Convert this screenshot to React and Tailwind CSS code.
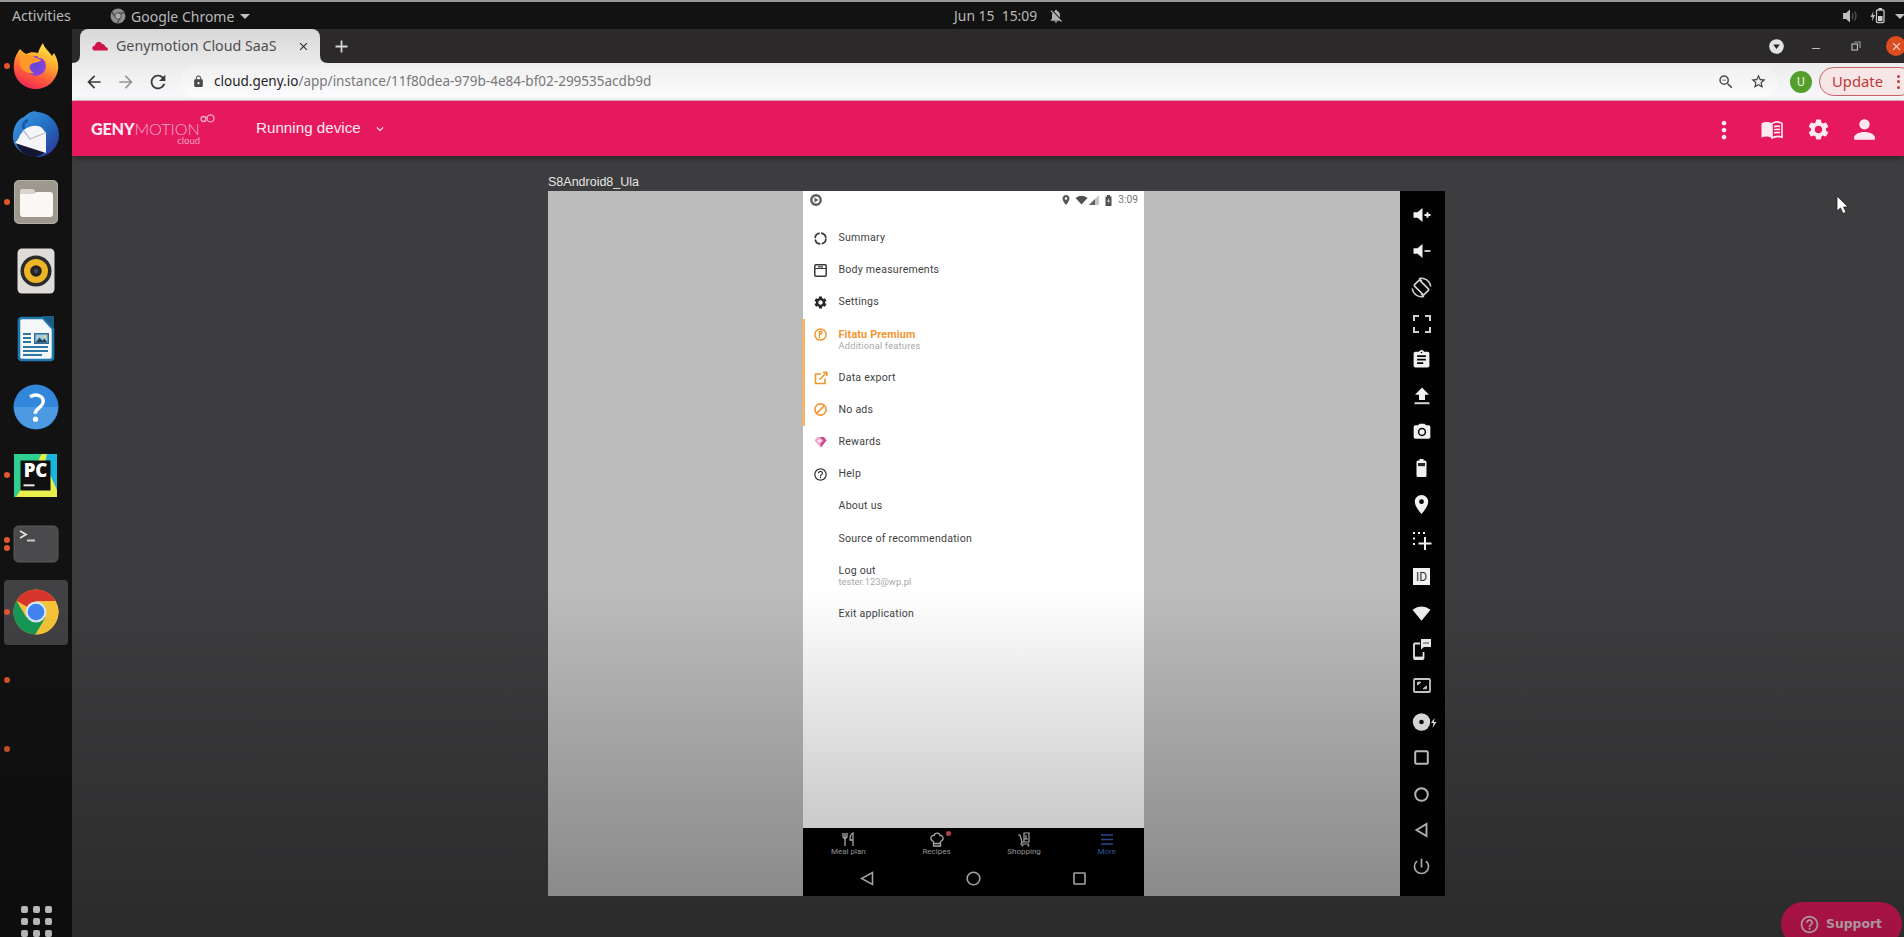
import React from "react";
import {
  MdMoreVert, MdSettings, MdPerson, MdAssignment,
  MdPhotoCamera, MdLocationOn, MdPowerSettingsNew, MdArrowBack,
  MdArrowForward, MdRefresh, MdLock, MdStarBorder, MdExpandMore, MdHelpOutline, MdDoNotDisturbAlt,
  MdNotificationsOff, MdZoomOut, MdClose,
} from "react-icons/md";

function Svg({ w = 24, h = 24, vb = "0 0 24 24", children, className = "" }) {
  return (
    <svg width={w} height={h} viewBox={vb} fill="none" className={"shrink-0 " + className}>
      {children}
    </svg>
  );
}

/* ---------- Dock ---------- */

const Firefox = () => (
  <Svg w={46} h={48} vb="0 0 46 48">
    <defs>
      <linearGradient id="ff1" x1="0.75" y1="0" x2="0.3" y2="1">
        <stop offset="0" stopColor="#fff04a" />
        <stop offset="0.4" stopColor="#ffa52c" />
        <stop offset="0.7" stopColor="#ff5a3c" />
        <stop offset="1" stopColor="#ee2457" />
      </linearGradient>
      <radialGradient id="ff2">
        <stop offset="0" stopColor="#5b4bd8" />
        <stop offset="1" stopColor="#9340d8" />
      </radialGradient>
    </defs>
    <path d="M7 7c2 2 4 4 6 5 4-2 8-2 12-1C26 7 28 4 30 1c1 5 6 8 9 13l2-3c3 5 5 11 4 17-2 11-11 19-22 19S2 39 1 28C0 19 3 12 7 7z" fill="url(#ff1)" />
    <circle cx="23" cy="24" r="10" fill="url(#ff2)" />
    <path d="M7 15c5-2 9-3 14 0l7 3c-2 3-7 2-10 4-3 3-1 7 3 9-5 1-11-1-13-6-2-3-1-7-1-10z" fill="#ff9a2a" />
    <path d="M25 12c5 0 9 4 10 9-3-4-6-5-10-5z" fill="#ffb52e" />
  </Svg>
);

const Thunderbird = () => (
  <Svg w={48} h={48} vb="0 0 48 48">
    <defs>
      <linearGradient id="tb" x1="0" y1="0" x2="1" y2="1">
        <stop offset="0" stopColor="#3f9be6" />
        <stop offset="0.5" stopColor="#2470c4" />
        <stop offset="1" stopColor="#2a2f92" />
      </linearGradient>
    </defs>
    <path d="M19 2c2-1 5-1 6 0 13 1 22 11 22 23S37 47 25 47 0 38 1 26C1 18 5 9 12 7c2-2 4-4 7-5z" fill="url(#tb)" />
    <path d="M4 33l30 8c-4 4-9 6-13 6-7-1-14-6-17-14z" fill="#151433" />
    <path d="M12 20c4-4 14-6 18-2l4 5 0 20L3 33c2-2 4-5 5-8z" fill="#f5f5f8" />
    <path d="M11 20l7 9 15-6" stroke="#b9bcc6" strokeWidth="1.3" />
    <path d="M12 19c-2-4 0-7 4-9" stroke="#1b58a8" strokeWidth="3" />
  </Svg>
);

const Files = () => (
  <Svg w={46} h={46} vb="0 0 46 46">
    <rect x="1" y="1" width="44" height="44" rx="5" fill="#9d998e" />
    <rect x="1.5" y="1.5" width="43" height="43" rx="5" stroke="#b3afa5" />
    <path d="M7 12q0-2 2-2h10q2 0 3 2l0 4H7z" fill="#dad5cc" />
    <path d="M7 15h14l2-2h14q3 0 3 3v19q0 3-3 3H10q-3 0-3-3z" fill="#faf7f5" />
  </Svg>
);

const Rhythmbox = () => (
  <Svg w={38} h={46} vb="0 0 38 46">
    <rect x="0.5" y="0.5" width="37" height="45" rx="4.5" fill="#dedbd8" />
    <circle cx="19" cy="23" r="15.5" fill="#2b2b2b" />
    <circle cx="19" cy="23" r="12" fill="#edb526" />
    <circle cx="19" cy="23" r="5.8" fill="#232326" />
    <circle cx="19" cy="23" r="2.2" fill="#42485a" />
  </Svg>
);

const Writer = () => (
  <Svg w={38} h={46} vb="0 0 38 46">
    <path d="M5 2h21l10 11v28q0 3-3 3H5q-3 0-3-3V5q0-3 3-3z" fill="#f5f8fa" stroke="#1e78ad" strokeWidth="2.6" />
    <path d="M25 0h12v12z" fill="#1a5d86" />
    <path d="M6 18h8M6 22h8M6 26h8M6 31h25M6 35h25M6 39h19" stroke="#2f76a3" strokeWidth="1.8" />
    <rect x="17" y="17" width="15" height="11" fill="#2e6d96" />
    <rect x="18.5" y="18.5" width="12" height="8" fill="#a5cde2" />
    <path d="M18.5 26.5l4-5 3 3 2-2 3 4z" fill="#26475c" />
    <circle cx="28" cy="20.5" r="1.3" fill="#f2d65c" />
  </Svg>
);

const Help = () => (
  <Svg w={46} h={46} vb="0 0 46 46">
    <circle cx="23" cy="23" r="22.5" fill="#3287da" />
    <path d="M1 23a22 22 0 0 0 44 0z" fill="#4d9ae2" />
    <path d="M17 12.8c6-3.6 13.2-1.2 13.2 4.4 0 6-8 6.8-8 12.6" stroke="#fff" strokeWidth="3.4" />
    <circle cx="22.5" cy="35.2" r="2.6" fill="#fff" />
  </Svg>
);

const PyCharm = () => (
  <div className="relative flex h-[43px] w-[43px] items-center justify-center">
    <Svg w={43} h={43} vb="0 0 43 43" className="absolute inset-0">
      <rect width="43" height="43" fill="#2fd58b" />
      <path d="M0 36L28 0h6l9 15v28H0z" fill="#e9ee4c" />
      <path d="M0 0h27L22 14 7 35 2 43H0z" fill="#2fcf8f" />
      <path d="M33 0h10v36L31 9z" fill="#18b5dc" />
      <rect x="6.5" y="6.5" width="30" height="30" fill="#101010" />
      <rect x="9.5" y="30.3" width="11" height="2" fill="#e6e6e6" />
    </Svg>
    <span className="relative -mt-[11px] font-['Open_Sans',sans-serif] text-[18.5px] font-extrabold leading-none text-white">PC</span>
  </div>
);

const Terminal = () => (
  <Svg w={46} h={38} vb="0 0 46 38">
    <rect x="1" y="1" width="44" height="36" rx="4.5" fill="#4a494b" stroke="#5b5a5c" />
    <path d="M7 6l6 3.5L7 13" stroke="#e0e0e0" strokeWidth="1.8" />
    <path d="M14 15.5h8" stroke="#c9c9c9" strokeWidth="2" />
  </Svg>
);

const Chrome = () => (
  <Svg w={46} h={46} vb="0 0 46 46">
    <circle cx="23" cy="23" r="22.5" fill="#f9c63a" />
    <path d="M23 23L3.5 11.8A22.5 22.5 0 0 1 42.5 12H23z" fill="#d9362c" />
    <path d="M3.5 11.8A22.5 22.5 0 0 0 22.5 45.5L32.6 28.5 23 23l-9.6 5.5z" fill="#169a57" />
    <path d="M32.6 28.5L22.5 45.5A22.5 22.5 0 0 0 42.5 12H23z" fill="#f9c63a" />
    <circle cx="23" cy="23" r="10.5" fill="#d9e9f6" />
    <circle cx="23" cy="23" r="8.3" fill="#4285f4" />
  </Svg>
);

const dock = [
  { icon: <Firefox />, dots: 1 },
  { icon: <Thunderbird />, dots: 0 },
  { icon: <Files />, dots: 1 },
  { icon: <Rhythmbox />, dots: 0 },
  { icon: <Writer />, dots: 0 },
  { icon: <Help />, dots: 0 },
  { icon: <PyCharm />, dots: 1 },
  { icon: <Terminal />, dots: 2 },
  { icon: <Chrome />, dots: 1, active: true },
  { icon: null, dots: 1 },
  { icon: null, dots: 1 },
];

function Dock() {
  return (
    <div className="flex w-[72px] shrink-0 flex-col overflow-hidden bg-[#131213] pt-[2.5px]">
      {dock.map((d, i) => (
        <div key={i} className="flex h-[68.3px] shrink-0 items-center pl-[4px]">
          <div
            className={
              d.active
                ? "flex h-[65px] w-[64px] items-center rounded-[4px] bg-[#424143]"
                : "flex h-[65px] w-[64px] items-center"
            }
          >
            <div className="-ml-[0.5px] flex w-[6px] shrink-0 flex-col gap-[2px]">
              {Array.from({ length: d.dots }).map((_, k) => (
                <span key={k} className="h-[6px] w-[6px] rounded-full bg-[#e2572b]" />
              ))}
            </div>
            <div className="-ml-[6px] flex w-[64px] shrink-0 justify-center">{d.icon}</div>
          </div>
        </div>
      ))}
      <div className="ml-[20.5px] mt-[123px] grid shrink-0 grid-cols-3 gap-[5px] self-start">
        {Array.from({ length: 9 }).map((_, i) => (
          <span key={i} className="h-[7px] w-[7px] rounded-[2px] bg-[#ffffff]" />
        ))}
      </div>
    </div>
  );
}

/* ---------- Desktop top bar ---------- */

function TopBar() {
  return (
    <div className="grid h-[29px] shrink-0 grid-cols-[960px_1fr] border-t-[2px] border-[#96999b] bg-[#121212] font-['Noto_Sans',sans-serif] text-[13.5px] text-[#b9b9b9]">
      <div className="flex items-center pl-[12px] pt-[1px]">
        <span className="w-[98px] text-[14.1px]">Activities</span>
        <Svg w={16} h={16} vb="0 0 16 16">
          <circle cx="8" cy="8" r="7.5" fill="#8e8e8e" />
          <path d="M8 5h7M5.5 9.5L2 4M10.5 9.5L7 15.5" stroke="#4d4d4d" strokeWidth="1.4" />
          <circle cx="8" cy="8" r="3.2" fill="#aaa" stroke="#555" />
        </Svg>
        <span className="ml-[5px] w-[105px] whitespace-nowrap text-[14px]">Google Chrome</span>
        <span className="ml-[4px] border-x-[5px] border-t-[5px] border-x-transparent border-t-[#c0c0c0]" />
      </div>
      <div className="flex items-center pt-[1px]">
        <span className="-ml-[6px] w-[86px] whitespace-pre text-[13.9px]">Jun 15  15:09</span>
        <MdNotificationsOff className="ml-[8px] h-[16px] w-[16px] text-[#b0b0b0]" />
        <div className="ml-auto flex items-center">
          <Svg w={16} h={14} vb="0 0 16 14">
            <path d="M1 4h3l4-3.5v13L4 10H1z" fill="#bdbdbd" />
            <path d="M10 4q2 3 0 6M12.5 2.5q3 4.5 0 9" stroke="#555" strokeWidth="1.3" />
          </Svg>
          <Svg w={15} h={16} vb="0 0 15 16" className="ml-[12px]">
            <path d="M3.500 3L0.500 9h2L2 13.500 5 7H3z" fill="#bdbdbd" />
            <rect x="6.500" y="2" width="7.500" height="12.500" rx="1" stroke="#bdbdbd" strokeWidth="1.3" />
            <path d="M8 8h4.500v5H8zM8.500 0h3.500v2H8.500z" fill="#cfcfcf" />
          </Svg>
          <span className="ml-[10px] mr-[-1px] border-x-[5px] border-t-[5px] border-x-transparent border-t-[#c0c0c0]" />
        </div>
      </div>
    </div>
  );
}

/* ---------- Browser chrome ---------- */

function TabStrip() {
  return (
    <div className="flex h-[34px] shrink-0 items-stretch bg-[#2b292a]">
      <Svg w={8} h={34} vb="0 0 8 34">
        <path d="M0 34Q8 34 8 26V34z" fill="#e4e3e4" />
      </Svg>
      <div className="flex w-[240px] items-center rounded-t-[8px] bg-gradient-to-b from-[#d8d8d9] to-[#eaeaeb] pl-[12px] font-['Noto_Sans',sans-serif]">
        <Svg w={16} h={10} vb="0 0 16 10">
          <path d="M1.5 9.5C-1 7 1 4.5 3 4.5 3.5 0.5 8.5-0.5 10 3c2.5 0 3 1.500 3.500 3 2 0 3 2 2 3.500z" fill="#cd1549" />
        </Svg>
        <span className="ml-[8px] w-[181px] whitespace-nowrap text-[14.25px] text-[#4f4f50]">Genymotion Cloud SaaS</span>
        <MdClose className="h-[13px] w-[13px] text-[#2c2c2c]" />
      </div>
      <Svg w={8} h={34} vb="0 0 8 34">
        <path d="M8 34Q0 34 0 26V34z" fill="#e4e3e4" />
      </Svg>
      <div className="flex items-center pl-[7px]">
        <Svg w={13} h={13} vb="0 0 13 13">
          <path d="M6.500 0.500v12M0.500 6.500h12" stroke="#d5d5d5" strokeWidth="1.8" />
        </Svg>
      </div>
      <div className="ml-auto flex items-center">
        <Svg w={15} h={15} vb="0 0 15 15">
          <circle cx="7.5" cy="7.5" r="7.3" fill="#e3e3e3" />
          <path d="M4.200 5.500h6.600L7.500 10z" fill="#252525" />
        </Svg>
        <span className="ml-[28px] mt-[5px] h-[1.5px] w-[8px] bg-[#b8b8b8]" />
        <Svg w={10} h={10} vb="0 0 10 10" className="ml-[31px]">
          <rect x="1" y="3" width="5.5" height="6" stroke="#b8b8b8" strokeWidth="1.2" />
          <path d="M3 1h6v6" stroke="#9a9a9a" strokeWidth="1.2" />
        </Svg>
        <div className="-mr-[2px] ml-[25px] flex h-[20px] w-[20px] items-center justify-center rounded-full bg-[#dd4d1f]">
          <MdClose className="h-[13px] w-[13px] text-[#efe0da]" />
        </div>
      </div>
    </div>
  );
}

function Toolbar() {
  return (
    <div className="flex h-[38px] shrink-0 items-center overflow-hidden border-b border-[#e8b9c9] bg-gradient-to-b from-[#ececec] to-[#f9f8fb] pl-[12px] font-['Noto_Sans',sans-serif]">
      <MdArrowBack className="h-[20px] w-[20px] shrink-0 text-[#3b3b3b]" />
      <MdArrowForward className="ml-[12px] h-[20px] w-[20px] shrink-0 text-[#969696]" />
      <MdRefresh className="ml-[11px] h-[22px] w-[22px] shrink-0 text-[#3b3b3b]" />
      <div className="ml-[11px] flex h-[30px] w-[1598px] shrink-0 items-center rounded-full bg-gradient-to-b from-[#f1f1f1] to-[#fcfbfd] pl-[12px]">
        <MdLock className="h-[13px] w-[13px] text-[#4a4a4a]" />
        <span className="ml-[9px] whitespace-nowrap text-[13.53px] text-[#78787a]">
          <span className="text-[#242427]">cloud.geny.io</span>/app/instance/11f80dea-979b-4e84-bf02-299535acdb9d
        </span>
        <MdZoomOut className="ml-auto h-[18px] w-[18px] text-[#4f4f4f]" />
        <MdStarBorder className="ml-[15px] mr-[11px] h-[17px] w-[17px] text-[#3c3c3c]" />
      </div>
      <div className="ml-[12px] flex h-[22px] w-[22px] shrink-0 items-center justify-center rounded-full bg-[#549f2b] font-['Roboto',sans-serif] text-[12px] text-[#e6f2dc]">
        U
      </div>
      <div className="ml-[7px] flex h-[29px] w-[96px] shrink-0 items-center rounded-full border border-[#c9606a] bg-[#f6e6e6] pl-[12px] text-[14.8px] text-[#bf3a39]">
        Update
        <span className="ml-[14px] flex flex-col gap-[2.5px]">
          <span className="h-[3px] w-[3px] rounded-full bg-[#bf3a39]" />
          <span className="h-[3px] w-[3px] rounded-full bg-[#bf3a39]" />
          <span className="h-[3px] w-[3px] rounded-full bg-[#bf3a39]" />
        </span>
      </div>
    </div>
  );
}

/* ---------- Genymotion header ---------- */

function Header() {
  return (
    <header className="relative z-10 flex h-[55px] shrink-0 items-center bg-[#e6195f] pl-[19px] text-[#fdeaf1] shadow-[0_2px_6px_rgba(0,0,0,0.4)]">
      <div className="flex w-[165px] items-start pt-[1px]">
        <div className="flex w-[109px] flex-col items-end font-['Lato',sans-serif]">
          <div className="mt-[7px] flex items-baseline self-start whitespace-nowrap text-[16.2px] leading-[16px]">
            <span className="font-black tracking-[-0.2px]">GENY</span>
            <span className="font-light tracking-[-0.05px] text-[#f8aec9]">MOTION</span>
          </div>
          <span className="text-[9.5px] leading-[8px] text-[#f3a3bf]">cloud</span>
        </div>
        <Svg w={15} h={9} vb="0 0 15 9">
          <circle cx="3.500" cy="5" r="2.5" stroke="#f7a9c5" strokeWidth="1.4" />
          <circle cx="10.500" cy="4.400" r="3.5" stroke="#f7a9c5" strokeWidth="1.4" />
        </Svg>
      </div>
      <span className="w-[104px] whitespace-nowrap font-['Liberation_Sans',sans-serif] text-[15.2px]">Running device</span>
      <MdExpandMore className="ml-[13px] h-[14px] w-[14px]" />
      <div className="ml-auto mr-[24px] flex items-center pt-[2px]">
        <MdMoreVert className="h-[28px] w-[28px]" />
        <Svg w={22} h={18} vb="0 0 22 18" className="ml-[23px]">
          <path d="M0.500 2.500C4 0.500 8 0.700 11 2.500v14.500C8 15.300 4 15 0.500 16.500z" fill="#fdeaf1" />
          <path d="M11 2.500C14 0.700 18 0.500 21 2.500v13.700C18 15 14 15.300 11 17z" stroke="#fdeaf1" strokeWidth="1.6" />
          <path d="M13 5.600q3-1 6-.2M13 8.800q3-1 6-.2M13 12q3-1 6-.2" stroke="#fdeaf1" strokeWidth="1.7" />
        </Svg>
        <MdSettings className="ml-[23px] h-[25px] w-[25px]" />
        <MdPerson className="ml-[18px] h-[31px] w-[31px]" />
      </div>
    </header>
  );
}

/* ---------- Android screen ---------- */

const ic = "#3a3a3a";
const org = "#f2962e";

const icons = {
  summary: (
    <Svg w={13} h={13} vb="0 0 13 13">
      <circle cx="6.5" cy="6.5" r="5.4" stroke={ic} strokeWidth="1.7" strokeDasharray="7 1.48" />
    </Svg>
  ),
  body: (
    <Svg w={13} h={13} vb="0 0 13 13">
      <rect x="0.8" y="0.8" width="11.4" height="11.4" rx="1" stroke={ic} strokeWidth="1.5" />
      <path d="M1 4.500h11M4 2.800h5" stroke={ic} strokeWidth="1.2" />
    </Svg>
  ),
  settings: <MdSettings className="h-[15px] w-[15px] text-[#262626]" />,
  premium: (
    <Svg w={13} h={13} vb="0 0 13 13">
      <circle cx="6.5" cy="6.5" r="5.6" stroke={org} strokeWidth="1.5" />
      <path d="M5.400 10V3.500h2.600q0 2.500-2.600 3" stroke={org} strokeWidth="1.3" />
    </Svg>
  ),
  exportIcon: (
    <Svg w={14} h={14} vb="0 0 14 14">
      <path d="M7 3H1.500v9.500h9.500V7.500M9 1.200h3.800V5M12.500 1.500L5.500 8.800" stroke={org} strokeWidth="1.6" />
    </Svg>
  ),
  noads: <MdDoNotDisturbAlt className="h-[15px] w-[15px] -scale-x-100 text-[#f2962e]" />,
  rewards: (
    <Svg w={13} h={12} vb="0 0 13 12">
      <path d="M3 1h7l2.500 3.500L6.500 11.500 0.500 4.500z" fill="#f3a8cc" />
      <path d="M6.500 1H10l2.500 3.500L7 11.500 6 7z" fill="#c94d91" />
      <path d="M3 4.500l4-2 2 2-2.500 3z" fill="#fff" opacity="0.7" />
    </Svg>
  ),
  help: <MdHelpOutline className="h-[15px] w-[15px] text-[#333]" />,
};

icons.noads = (
  <Svg w={13} h={13} vb="0 0 13 13">
    <circle cx="6.5" cy="6.5" r="5.6" stroke={org} strokeWidth="1.6" />
    <path d="M2.600 10.400L10.400 2.600" stroke={org} strokeWidth="1.6" />
  </Svg>
);

const menu = [
  { label: "Summary", icon: icons.summary },
  { label: "Body measurements", icon: icons.body },
  { label: "Settings", icon: icons.settings },
  { label: "Fitatu Premium", icon: icons.premium, sub: "Additional features", premium: true },
  { label: "Data export", icon: icons.exportIcon },
  { label: "No ads", icon: icons.noads },
  { label: "Rewards", icon: icons.rewards },
  { label: "Help", icon: icons.help },
  { label: "About us" },
  { label: "Source of recommendation" },
  { label: "Log out", sub: "tester.123@wp.pl" },
  { label: "Exit application" },
];

function MenuRow({ item }) {
  return (
    <div className={item.sub ? "flex h-[43px] pl-[9px]" : "flex h-[32.2px] pl-[9px]"}>
      <div className="flex h-[32px] w-[17px] items-center justify-center">{item.icon}</div>
      <div className="ml-[9.5px] flex flex-col pt-[10px]">
        <span
          className={
            item.premium
              ? "text-[10.8px] font-bold leading-[12px] tracking-[0.15px] text-[#f2962e]"
              : "text-[10.6px] leading-[12px] tracking-[0.22px] text-[#3f3f3f]"
          }
        >
          {item.label}
        </span>
        {item.sub && (
          <span
            className={
              item.premium
                ? "text-[9.3px] leading-[10px] tracking-[0.2px] text-[#aaa6ac]"
                : "text-[9.3px] leading-[10px] tracking-[0.05px] text-[#aaa6ac]"
            }
          >
            {item.sub}
          </span>
        )}
      </div>
    </div>
  );
}

const tabs = [
  {
    label: "Meal plan",
    icon: (
      <Svg w={14} h={15} vb="0 0 14 15">
        <path d="M2 1v4l2 2v7M4 1v6M6 1v4L4 7M12 14V1Q9 2 9 8h3" stroke="#d5d5d5" strokeWidth="1.3" />
      </Svg>
    ),
  },
  {
    label: "Recipes",
    dot: true,
    icon: (
      <Svg w={14} h={15} vb="0 0 14 15">
        <path d="M3.500 9.500C-0.500 8 0.500 3 4 3.500 5 0 9.500 0.500 10 3.500c3.500-.5 4.500 4.500.5 6v4.500h-7zM3.500 11.500h7" stroke="#d5d5d5" strokeWidth="1.3" />
      </Svg>
    ),
  },
  {
    label: "Shopping",
    icon: (
      <Svg w={13} h={15} vb="0 0 13 15">
        <path d="M0 3h2l2 7h7M6 1h5v9H6zM8 3v4M4 10l-1 2h8M10 7H6" stroke="#d5d5d5" strokeWidth="1.2" />
        <circle cx="4.5" cy="13.5" r="1" fill="#d5d5d5" />
        <circle cx="10.5" cy="13.5" r="1" fill="#d5d5d5" />
      </Svg>
    ),
  },
  {
    label: "More",
    blue: true,
    icon: (
      <Svg w={14} h={15} vb="0 0 14 15">
        <path d="M1 3h12M1 7.500h12M1 12h12" stroke="#3b5bb5" strokeWidth="1.4" />
      </Svg>
    ),
  },
];

function Phone() {
  return (
    <div className="flex w-[341px] shrink-0 flex-col bg-white font-['Roboto',sans-serif]">
      <div className="flex h-[18px] items-center pl-[7px] pr-[6px]">
        <Svg w={12} h={12} vb="0 0 12 12">
          <circle cx="6" cy="6" r="4.7" stroke="#5e5e5e" strokeWidth="2.4" />
          <path d="M4.500 3.500l4 2.500-4 2.500z" fill="#5e5e5e" />
        </Svg>
        <MdLocationOn className="ml-auto h-[12px] w-[12px] text-[#585858]" />
        <Svg w={13} h={10} vb="0 0 13 10" className="ml-[3px]">
          <path d="M0.500 3Q6.500-1.500 12.500 3L6.500 9.500z" fill="#505050" />
        </Svg>
        <Svg w={10} h={10} vb="0 0 10 10" className="ml-[1px]">
          <path d="M0 10L10 0v10z" fill="#c4c4c4" />
          <path d="M0 10l6-6v6z" fill="#606060" />
        </Svg>
        <Svg w={7} h={11} vb="0 0 7 11" className="ml-[6px]">
          <path d="M0.500 1.500h1.500V0h3v1.500h1.500V11h-6z" fill="#505050" />
          <path d="M4 3L2 6.500h1.500V9L5 5.500H3.800z" fill="#ddd" />
        </Svg>
        <span className="ml-[6px] text-[10.2px] leading-none text-[#757575]">3:09</span>
      </div>
      <div className="flex flex-1 flex-col pt-[13px]">
        <div>{menu.slice(0, 3).map((m) => <MenuRow key={m.label} item={m} />)}</div>
        <div className="-ml-[1px] border-l-[3px] border-[#f2b469] [&>div]:pl-[7px]">
          {menu.slice(3, 6).map((m) => <MenuRow key={m.label} item={m} />)}
        </div>
        <div>{menu.slice(6).map((m) => <MenuRow key={m.label} item={m} />)}</div>
      </div>
      <div className="flex h-[68px] shrink-0 flex-col bg-black">
        <div className="flex h-[34px] justify-between pl-[28px] pr-[28px] pt-[4px]">
          {tabs.map((t) => (
            <div key={t.label} className="relative flex flex-col items-center">
              {t.icon}
              {t.dot && <span className="absolute right-0 top-[-1px] h-[5px] w-[5px] rounded-full bg-[#e55068]" />}
              <span className={t.blue ? "text-[8px] leading-[10px] text-[#4069c0]" : "text-[8px] leading-[10px] text-[#bdbdbd]"}>
                {t.label}
              </span>
            </div>
          ))}
        </div>
        <div className="flex items-center justify-between pl-[57px] pr-[58px] pt-[9px]">
          <Svg w={14} h={15} vb="0 0 14 15">
            <path d="M12.500 1.500v12L1.500 7.500z" stroke="#d8d8d8" strokeWidth="1.6" />
          </Svg>
          <Svg w={15} h={15} vb="0 0 15 15">
            <circle cx="7.5" cy="7.5" r="6.3" stroke="#d8d8d8" strokeWidth="1.6" />
          </Svg>
          <Svg w={13} h={13} vb="0 0 13 13">
            <rect x="1" y="1" width="11" height="11" rx="0.5" stroke="#d8d8d8" strokeWidth="1.6" />
          </Svg>
        </div>
      </div>
    </div>
  );
}

/* ---------- Device tool column ---------- */

const w = "#f1f1f1";
const tools = [
  <Svg key="v+" w={18} h={14} vb="0 0 18 14">
    <path d="M0.500 4.300h4L9.500 0v14L4.500 9.700h-4z" fill={w} />
    <path d="M14.500 4.200v5.600M11.500 7h6" stroke={w} strokeWidth="1.9" />
  </Svg>,
  <Svg key="v-" w={18} h={14} vb="0 0 18 14">
    <path d="M0.500 4.300h4L9.500 0v14L4.500 9.700h-4z" fill={w} />
    <path d="M11.500 7h6" stroke={w} strokeWidth="1.6" />
  </Svg>,
  <Svg key="rot" w={21} h={21} vb="0 0 21 21">
    <rect x="3.600" y="6.600" width="13.800" height="7.800" rx="1" transform="rotate(45 10.5 10.5)" stroke="#d5d5d5" strokeWidth="1.6" />
    <path d="M8 1.500A9.300 9.300 0 0 1 19.700 9.500M13 19.500A9.300 9.300 0 0 1 1.300 11.500M8 1.500l3 2.500M13 19.500l-3-2.500" stroke="#cfcfcf" strokeWidth="1.5" />
  </Svg>,
  <Svg key="full" w={18} h={18} vb="0 0 18 18">
    <path d="M1 6V1h5M12 1h5v5M17 12v5h-5M6 17H1v-5" stroke="#d0d0d0" strokeWidth="2" />
  </Svg>,
  <MdAssignment key="clip" className="h-[21px] w-[21px]" />,
  <Svg key="up" w={16} h={18} vb="0 0 16 18">
    <path d="M8 0.500l7 7.200h-4V13H5V7.700H1z" fill={w} />
    <path d="M0.500 16.200h15" stroke="#d5d5d5" strokeWidth="2" />
  </Svg>,
  <MdPhotoCamera key="cam" className="h-[20px] w-[20px]" />,
  <Svg key="bat" w={11} h={18} vb="0 0 11 18">
    <path d="M3.500 0h4v1.500H9q1.500 0 1.500 1.500v13.500q0 1.500-1.500 1.500H2Q0.500 18 0.500 16.500V3Q0.500 1.500 2 1.500h1.500z" fill={w} />
    <rect x="2" y="4" width="7" height="3.2" fill="#2a2a2a" />
  </Svg>,
  <MdLocationOn key="loc" className="h-[23px] w-[23px]" />,
  <Svg key="sel" w={20} h={20} vb="0 0 20 20">
    <path d="M1 2h2M6 2h2M11 2h2M1 7.500h2M1 13h2" stroke={w} strokeWidth="2" />
    <path d="M13 6v13M6.500 12.500h13" stroke={w} strokeWidth="2" />
  </Svg>,
  <span key="id" className="flex h-[17px] w-[17px] items-center justify-center bg-[#f1f1f1] font-['Roboto',sans-serif] text-[12px] leading-none text-[#333]">ID</span>,
  <Svg key="wifi" w={19} h={15} vb="0 0 20 15">
    <path d="M0.500 3.500Q10-3 19.500 3.500L10 15z" fill={w} />
  </Svg>,
  <Svg key="sms" w={20} h={21} vb="0 0 20 21">
    <path d="M8 4.500H3q-1 0-1 1V19q0 1 1 1h7.500q1 0 1-1v-6" stroke={w} strokeWidth="1.8" />
    <path d="M2 18.500h9.500" stroke={w} strokeWidth="1.8" />
    <path d="M9 0h10v8h-7l-3 2.500z" fill={w} />
    <path d="M11 4h6" stroke="#555" strokeWidth="1" />
  </Svg>,
  <Svg key="asp" w={18} h={15} vb="0 0 18 15">
    <rect x="1" y="1" width="16" height="13" rx="1" stroke="#d5d5d5" strokeWidth="1.8" />
    <path d="M4.500 7V4.200h3.500zM13.500 8v2.800H10z" stroke="#d5d5d5" strokeWidth="1" fill="#d5d5d5" />
  </Svg>,
  <Svg key="disc" w={26} h={18} vb="0 0 26 18" className="ml-[6px]">
    <circle cx="9.5" cy="9" r="8.7" fill={w} />
    <circle cx="9.5" cy="9" r="2.3" fill="#111" />
    <path d="M22.500 5l-3.500 5h2.500l-1 5 4-6h-2.500z" fill={w} />
  </Svg>,
  <Svg key="sq" w={15} h={15} vb="0 0 15 15">
    <rect x="1.2" y="1.2" width="12.6" height="12.6" rx="1.2" stroke="#dadada" strokeWidth="2" />
  </Svg>,
  <Svg key="ci" w={15} h={15} vb="0 0 15 15">
    <circle cx="7.5" cy="7.5" r="6.3" stroke="#dadada" strokeWidth="2" />
  </Svg>,
  <Svg key="tr" w={15} h={16} vb="0 0 15 16">
    <path d="M12.500 2v12L2.500 8z" stroke="#dadada" strokeWidth="1.9" />
  </Svg>,
  <MdPowerSettingsNew key="pw" className="h-[21px] w-[21px] text-[#dadada]" />,
];

function ToolColumn() {
  return (
    <div className="flex w-[45px] shrink-0 flex-col bg-[#020202] pr-[2px] pt-[6px] text-[#f1f1f1]">
      {tools.map((t, i) => (
        <div key={i} className="flex h-[36.2px] shrink-0 items-center justify-center">{t}</div>
      ))}
    </div>
  );
}

export default function App() {
  return (
    <div className="relative flex h-[937px] w-[1904px] flex-col overflow-hidden bg-[#121212]">
      <TopBar />
      <div className="flex min-h-0 flex-1">
        <Dock />
        <div className="flex min-w-0 flex-1 flex-col bg-[#3d3d3f]">
          <TabStrip />
          <Toolbar />
          <Header />
          <div className="pl-[476px] pt-[18px]">
            <div className="h-[17px] whitespace-nowrap font-['Liberation_Sans',sans-serif] text-[12.5px] leading-[17px] text-[#e6e6e6]">
              S8Android8_Ula
            </div>
            <div className="flex h-[705px] w-[897px]">
              <div className="w-[255px] bg-[#bcbcbd]" />
              <Phone />
              <div className="w-[256px] bg-[#bcbcbd]" />
              <ToolColumn />
            </div>
          </div>
        </div>
      </div>

      {/* Floating support button */}
      <div className="absolute left-[1781px] top-[902px] flex h-[44px] w-[121px] items-center rounded-full bg-[#e6195f] pl-[18px] font-['DejaVu_Sans',sans-serif] text-[12.4px] font-bold text-[#f3d0de]">
        <MdHelpOutline className="mr-[6px] h-[21px] w-[21px]" />
        Support
      </div>

      {/* Bottom shade over the whole desktop */}
      <div className="pointer-events-none absolute inset-x-0 bottom-0 h-[350px] bg-gradient-to-b from-transparent to-black/30" />

      {/* Mouse pointer */}
      <svg width="14" height="20" viewBox="0 0 14 20" className="absolute left-[1836px] top-[195px]">
        <path d="M1 1v15l3.500-3 2.500 5.500 3-1.300L7.600 12H12z" fill="#fff" stroke="#222" strokeWidth="0.8" />
      </svg>
    </div>
  );
}
